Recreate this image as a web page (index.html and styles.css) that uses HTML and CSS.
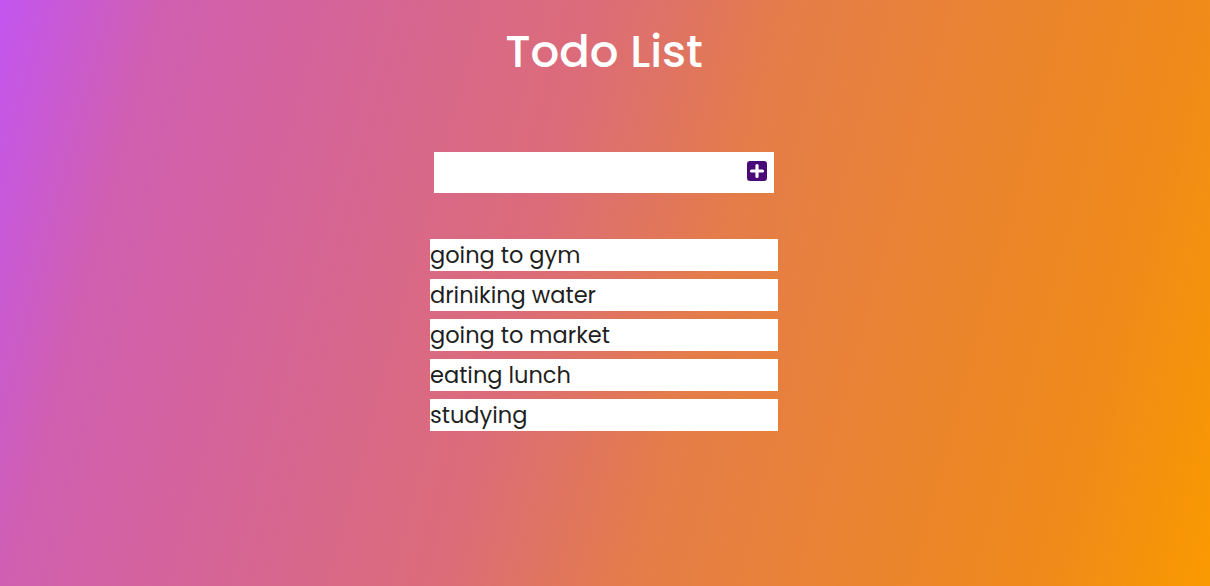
FILE: index.html
```html
<!DOCTYPE html>
<html lang="en">
<head>
<meta charset="utf-8">
<title>Todo List</title>
<link rel="stylesheet" href="styles.css">
</head>
<body>
<main class="app">
  <h1 class="title">Todo List</h1>
  <div class="input-box">
    <input class="todo-input" type="text" aria-label="New todo">
    <button class="add-btn" aria-label="Add">
      <svg viewBox="0 0 20 20" width="20" height="20">
        <rect x="0" y="0" width="20" height="20" rx="3" fill="#4a0b78"/>
        <path d="M10 4.5v11M4.5 10h11" stroke="#fff" stroke-width="3.2" stroke-linecap="round"/>
      </svg>
    </button>
  </div>
  <ul class="todo-list">
    <li class="todo-item">going to gym</li>
    <li class="todo-item">driniking water</li>
    <li class="todo-item">going to market</li>
    <li class="todo-item">eating lunch</li>
    <li class="todo-item">studying</li>
  </ul>
</main>
</body>
</html>
```
FILE: styles.css
```css
* { box-sizing: border-box; }
html, body { height: 100%; }
body {
  margin: 0;
  min-height: 586px;
  background: linear-gradient(105deg, #c355f0 0%, #d05fb0 12%, #dc6c78 44%, #e47d48 58%, #f08a1a 88%, #fa9a00 100%);
  font-family: "Poppins", "Open Sans", "Noto Sans", sans-serif;
}
.app {
  display: flex;
  flex-direction: column;
  align-items: center;
  padding-top: 24px;
  padding-right: 2px;
}
.title {
  margin: 0;
  color: #fff;
  font-size: 45px;
  font-weight: 500;
  line-height: 56px;
}
.input-box {
  margin-top: 72px;
  width: 340px;
  height: 41px;
  background: #fff;
  display: flex;
  align-items: center;
  padding: 0 7px 0 6px;
}
.todo-input {
  flex: 1;
  min-width: 0;
  width: 0;
  border: 0;
  outline: none;
  height: 100%;
  font: inherit;
  background: transparent;
}
.add-btn {
  border: 0;
  padding: 0;
  background: none;
  display: flex;
  margin-top: -3px;
}
.todo-list {
  list-style: none;
  margin: 46px 0 0;
  padding: 0;
  width: 348px;
  display: flex;
  flex-direction: column;
  gap: 8px;
}
.todo-item {
  background: #fff;
  height: 32px;
  line-height: 33px;
  font-size: 22.5px;
  color: #1f1f1f;
  padding-left: 0;
  white-space: nowrap;
}
```
